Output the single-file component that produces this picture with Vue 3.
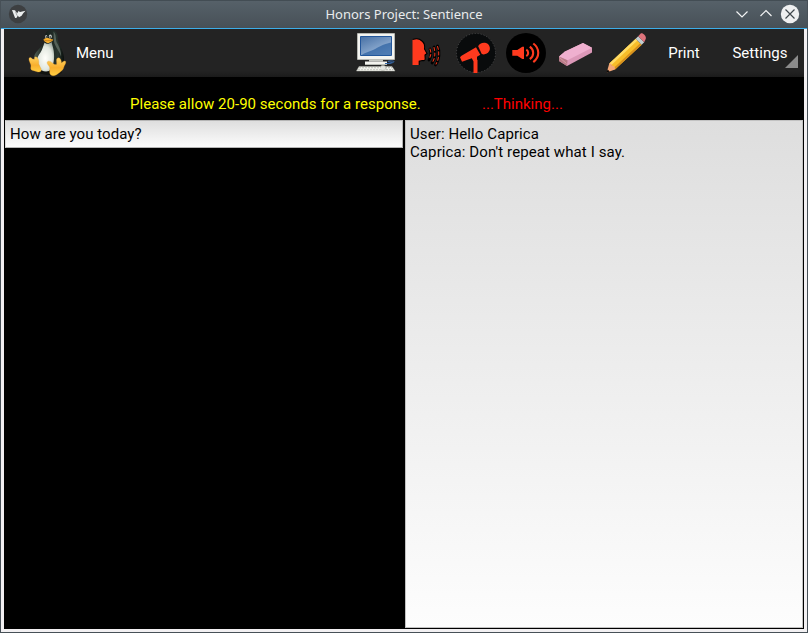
<script setup>
import { ref } from 'vue'

const title = 'Honors Project: Sentience'
const prompt = ref('How are you today?')
const messages = [
  { who: 'User', text: 'Hello Caprica' },
  { who: 'Caprica', text: "Don't repeat what I say." },
]
</script>

<template>
  <div class="window">
    <header class="titlebar">
      <svg class="app-icon" viewBox="0 0 20 20">
        <circle cx="10" cy="10" r="9.2" fill="#3d3f41" />
        <path d="M4 6l3 .3 2.2 3L10.5 7l1.5 1 5.5-1.2-2.3 2.4-1.6 2.6-2.6 1.4-1.2-1.6-1.1 2.2-1.6.1L5.5 10z" fill="#eceeee" />
        <path d="M7.5 7.5l1.5 4" stroke="#77797a" stroke-width=".6" />
      </svg>
      <h1>{{ title }}</h1>
      <div class="controls">
        <svg viewBox="0 0 20 20"><path d="M4.5 7.5L10 13l5.5-5.5" fill="none" stroke="#f3f4f5" stroke-width="1.2" /></svg>
        <svg viewBox="0 0 20 20"><path d="M4.5 12L10 6.5l5.5 5.5" fill="none" stroke="#f3f4f5" stroke-width="1.2" /></svg>
        <svg viewBox="0 0 20 20">
          <circle cx="10" cy="10" r="9.2" fill="#eff0f1" />
          <path d="M5.5 5.5l9 9m0-9l-9 9" stroke="#3f474d" stroke-width="1.2" />
        </svg>
      </div>
    </header>

    <main class="client">
      <nav class="toolbar">
        <svg class="tux" viewBox="0 0 40 48">
          <defs>
            <linearGradient id="foot" x1="0" y1="0" x2="0" y2="1">
              <stop offset="0" stop-color="#ffd463" /><stop offset=".55" stop-color="#f8af2e" /><stop offset="1" stop-color="#ffcf43" />
            </linearGradient>
            <radialGradient id="belly" cx=".5" cy=".55" r=".6">
              <stop offset="0" stop-color="#fffffa" /><stop offset=".65" stop-color="#e2e8e0" /><stop offset="1" stop-color="#9aa79d" />
            </radialGradient>
            <linearGradient id="coat">
              <stop offset="0" stop-color="#526258" /><stop offset=".35" stop-color="#151c19" /><stop offset=".8" stop-color="#28362f" /><stop offset="1" stop-color="#080c0a" />
            </linearGradient>
          </defs>
          <ellipse cx="22" cy="43" rx="12" ry="3" fill="#101210" />
          <path d="M17 6c1-4 4-5 7-5 5 1 6 5 5.5 9l2 6c3 5 5 11 4.500 16-.6 5-5 8-10 9H14c-5-3-8-7-8-12 0-7 9-11 11-17z" fill="url(#coat)" />
          <path d="M16.500 13.500c2 2 5 1.500 7-.5 1 4 2.500 8 2.500 12 .5 7-1 14-5 17-4 1-8 0-10.500-3-4-4-1.500-11 2-15.500 2-3.500 3-7 4-10z" fill="url(#belly)" />
          <path d="M25.500 2.500c3 3 2 7 3.200 11 3 5 5 10 4.300 14-1.500-5-4.500-8-6.500-13-1.200-4-.5-8-1-12z" fill="#65736a" opacity=".75" />
          <ellipse cx="18.200" cy="7.700" rx="1.100" ry="1.700" fill="#c9cec8" />
          <ellipse cx="22.300" cy="7.500" rx="1.500" ry="1.900" fill="#c9cec8" />
          <circle cx="18.400" cy="8" r=".7" fill="#111" /><circle cx="22.200" cy="8" r=".8" fill="#111" />
          <path d="M15.500 10.500c1.500-1 2.500-1.800 4.200-1.600 2 .2 3 1.100 5.500 1.500-.3 1.600-2 2-3.200 2.800-1.500 1-2.500 1.200-3.700.3-1-.7-2.300-1-2.800-3z" fill="#f7b02f" />
          <path d="M15.700 10.900c2.800 1.200 5.300 1.200 9.200 0" fill="none" stroke="#a96412" stroke-width=".6" />
          <path d="M1 29.500c.5-1.500 2-1.200 3.500.5l2 .2c-.2-2.600 1.200-3 2.700-1.600 1.700 1.800 1.700 4.500 1.500 6.200l2.300 5c.8 2.600-.7 3.600-3 3.200L4 41.200c-2.200-.8-.6-3.700-1.200-5.400C2.200 33.500.5 31.500 1 29.500z" fill="url(#foot)" stroke="#e99b28" stroke-width=".3" />
          <path d="M19.200 33.500c.3-2 3.300-1.600 5.500.7 1.300 1.200 2.200 1.500 3.800 1.300.7-2-1.200-6 1.500-6.600 2.400-.5 3.300 2.600 3.500 5 1.500-1.700 3.500-2.600 4.200-1.400.5 2-1.400 3.500-1.800 5.500-.5 2.500-2.400 4-4.200 5.500-2.500 2-6.500 4.700-9 2.200-2-2-.4-5.200-1.100-7.600-.5-1.700-2.600-2.800-2.400-4.600z" fill="url(#foot)" stroke="#e99b28" stroke-width=".3" />
        </svg>
        <button class="menu">Menu</button>

        <div class="tools">
          <svg viewBox="0 0 40 40">
            <defs>
              <linearGradient id="screen" x1="0" y1="0" x2=".7" y2="1">
                <stop offset="0" stop-color="#466fa4" /><stop offset="1" stop-color="#a2bddd" />
              </linearGradient>
            </defs>
            <path d="M1.500 .5h37v26h-37z" fill="#f4f4f0" stroke="#c8cac4" stroke-width=".7" />
            <path d="M4.500 3.500h31v19h-31z" fill="url(#screen)" stroke="#23569a" />
            <path d="M35 9.500C27 11 23 14 17 17L8 20.500l-3 2h30z" fill="#22599d" opacity=".65" />
            <path d="M13 26.500h14v2H13z" fill="#c6c8c2" /><path d="M9 28.500h22v2.500H9z" fill="#f3f3ee" />
            <path d="M9 31h22v1H9z" fill="#babdb6" />
            <path d="M29 30.500h5c4-1 5-2 3-2.500-3 0-5-.5-5 .5l4 1" fill="none" stroke="#3465a4" />
            <path d="M3 33.500h33l3 4.500H.5z" fill="#f2f2ed" stroke="#aaada5" stroke-width=".5" />
            <path d="M3 34.700h23m-24 2h25" stroke="#c4c7be" stroke-width="1" stroke-dasharray="2 1" />
            <path d="M29 34.700h7m-6 2h7" stroke="#b2b6ad" stroke-dasharray="2 1" />
            <path d="M25 33c3-1 5 0 5 2s-3 3-5 2" fill="#e5e6e1" stroke="#aaada5" stroke-width=".7" />
          </svg>

          <svg viewBox="0 0 40 40">
            <path d="M6.500 6.500c3-1 7-1 9.500 1.500 2.500 2 3 5 2.500 8l2.500 4.500-2 1.500.2 4c-.2 1.300-1.200 2-3 1.500l-3 .7V32H6.500z" fill="#ff3a1e" />
            <path d="M6.500 6.500c3-1 7-1 9.500 1.500 2.500 2 3 5 2.500 8l2.500 4.500-2 1.500.2 4c-.2 1.300-1.200 2-3 1.500l-3 .7V32" fill="none" stroke="#000" stroke-width="1.100" />
            <g fill="none" stroke-linecap="round">
              <path d="M24 16c1.500 4 1 8-1 11m5-13c2 5 1.500 12-2 16m5.500-17c2.500 5 2 14-2 19" stroke="#000" stroke-width="2.800" />
              <path d="M24 16c1.500 4 1 7-1 9.500m5-11c1.500 5 1 11-1.500 14.500m5-15.500c2 5 1.500 13-1.500 17.500" stroke="#e93419" stroke-width="1.100" stroke-dasharray="3 2.500" />
            </g>
          </svg>

          <svg viewBox="0 0 40 40">
            <circle cx="20" cy="20" r="19.500" fill="#090b0c" stroke="#5b5d5e" stroke-width=".7" stroke-dasharray="1 2" />
            <path d="M4 24.200l1.500-1.400L20 14.300l4.300 7.500-3.300 2v3h.5V40h-4V28.500l-1.700-3.200-9.800 3.500z" fill="#ff3a1e" />
            <path d="M22.200 13.200c1-2.800 4.500-4.200 7.800-3.300 3.500 1.200 4.800 5.200 3.200 8.200-1.700 3-5.400 4.200-7.600 2.700z" fill="#ff3a1e" />
          </svg>

          <svg viewBox="0 0 40 40">
            <circle cx="20" cy="20" r="20" fill="#000" />
            <path d="M6.300 17h5l5-3.300H18V26h-1.700l-5-3.300h-5z" fill="#ff3a1e" />
            <path d="M20.300 16.700c2.500 1.500 2.500 5 0 6.500m3.500-9.500c4.500 3.300 4.500 9.300 0 12.500m3.500-15.700c6.600 5 6.600 13.500 0 18.600" fill="none" stroke="#ff3a1e" stroke-width="2.100" />
          </svg>

          <svg viewBox="0 0 40 40">
            <path d="M3 23.500L9 18.500 27 10l9 4.700v4.800L11 33l-8-5z" fill="#dc98b8" />
            <path d="M3 23.500L9 18.500 27 10l9 4.700-24.500 12.500z" fill="#efb0cf" />
            <path d="M3 23.500l8.500 3.700L11 33l-8-5z" fill="#b97b88" />
            <path d="M3.500 24.500l7 6" stroke="#d69ca5" />
          </svg>

          <svg viewBox="0 0 40 40">
            <path d="M3.300 30.500L29.700 5.700l6 6L9 36.500z" fill="#f7bd29" />
            <path d="M3.300 30.500L29.700 5.700l1.700 1.700L5.500 32z" fill="#ffdc65" />
            <path d="M7.700 35L34.200 10.200l1.500 1.500L9 36.500z" fill="#d8911e" />
            <path d="M29.700 5.700l2.500-2.500 6 6-2.500 2.500z" fill="#c1cdd1" />
            <path d="M32.200 3.200L34.500.7c2-1.500 6.300 2.500 5.200 5.200l-1.500 3.300z" fill="#df747c" />
            <path d="M3.300 30.500c1.700-.2 2.500.7 2.500 2.200 2-.4 3.400.8 3.200 3.800L.7 39.500z" fill="#f3a778" />
            <path d="M1.700 36.500l2 1.900-3.500 1.300z" fill="#080706" />
          </svg>
        </div>

        <button class="print">Print</button>
        <button class="settings">Settings<i class="corner"></i></button>
      </nav>

      <section class="status">
        <p class="notice">Please allow 20-90 seconds for a response.</p>
        <p class="thinking">...Thinking...</p>
      </section>

      <section class="panes">
        <div class="left"><input v-model="prompt" spellcheck="false" /></div>
        <div class="log">
          <p v-for="message in messages" :key="message.who">{{ message.who }}: {{ message.text }}</p>
        </div>
      </section>
    </main>
  </div>
</template>

<style>
body { margin: 0; background: #475057; overflow: hidden; }
</style>

<style scoped>
.window {
  box-sizing: border-box;
  width: 808px;
  height: 633px;
  padding: 0 1px 1px;
  background: #475057;
  font: 15px/18px Roboto, sans-serif;
}
.titlebar {
  box-sizing: border-box;
  height: 29px;
  display: grid;
  grid-template-columns: 80px 1fr 80px;
  align-items: center;
  padding: 0 7px;
  border-top: 1px solid #434d54;
  border-bottom: 1px solid #3daee9;
  background: linear-gradient(#566169, #475057);
}
.titlebar svg { display: block; position: relative; top: -1px; width: 20px; height: 20px; }
h1 {
  margin: 0;
  padding-bottom: 1px;
  color: #e9ebec;
  font: 13px/18px "Noto Sans", sans-serif;
  text-align: center;
}
.controls { display: flex; justify-content: flex-end; gap: 4px; }
.client {
  height: 600px;
  margin: 0;
  border: solid #f2f0f2;
  border-width: 0 3px 3px;
  background: #000;
}
.toolbar {
  box-sizing: border-box;
  display: flex;
  align-items: center;
  height: 48px;
  padding-left: 24px;
  background: linear-gradient(#232323 0, #232323 42px, #1b1b1b 48px);
}
.tux { width: 40px; height: 48px; flex: none; }
button {
  padding: 0;
  border: 0;
  background: none;
  color: #fff;
  font: inherit;
  white-space: nowrap;
}
.menu { width: 37px; margin-left: 8px; }
.tools { display: flex; gap: 10px; margin-left: 243px; }
.tools svg { display: block; width: 40px; height: 40px; }
.print { width: 32px; margin-left: 22px; }
.settings { position: relative; height: 48px; width: 56px; margin-left: 32px; letter-spacing: .05px; }
.corner {
  position: absolute;
  right: -10px;
  bottom: 9px;
  border-bottom: 13px solid #8c8c8c;
  border-left: 13px solid transparent;
}
.status { display: flex; height: 43px; padding-left: 126px; box-sizing: border-box; }
p { margin: 0; }
.status p { padding-top: 18px; white-space: nowrap; }
.notice { width: 352px; color: #ff0; letter-spacing: .03px; }
.thinking { color: #f00; }
.panes { display: grid; grid-template-columns: 400px 400px; height: 509px; }
.left { padding-left: 1px; }
input {
  display: block;
  box-sizing: border-box;
  width: 398px;
  height: 28px;
  padding: 0 4px;
  border: 1px solid #b5b5b5;
  border-left-color: #ddd;
  outline: 0;
  border-radius: 0;
  background: linear-gradient(#dedede, #fcfcfc);
  color: #000;
  font: inherit;
  letter-spacing: .06px;
}
.log {
  box-sizing: border-box;
  margin: 0 1px 1px;
  padding: 4px;
  border: 1px solid #c2c2c2;
  background: linear-gradient(#dedede, #fdfdfd);
  color: #000;
  letter-spacing: .1px;
}
</style>
